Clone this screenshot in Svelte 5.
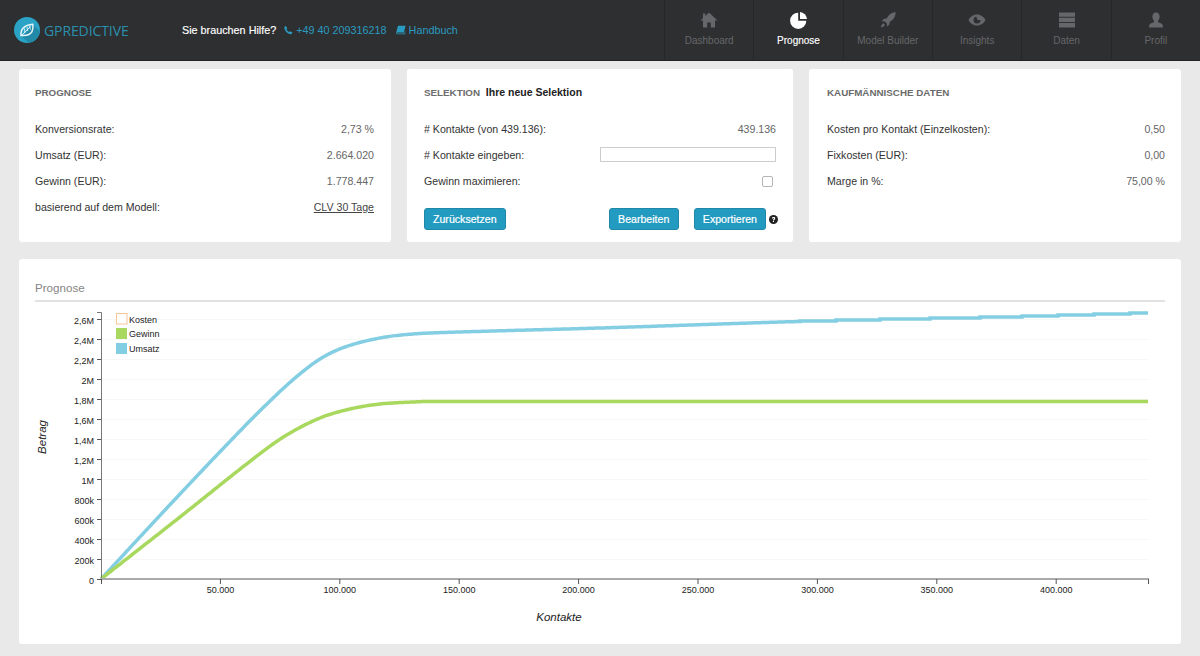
<script>
  const fmtY = (v) => (v === 0 ? '0' : v < 1000 ? v + 'k' : String(v / 1000).replace('.', ',') + 'M');
  const yTicks = Array.from({ length: 14 }, (_, i) => ({ y: 580 - i * 20, label: fmtY(i * 200) }));
  const xTicks = [1, 2, 3, 4, 5, 6, 7, 8].map((i) => ({
    x: 101 + i * 119.4,
    label: (i * 50).toString() + '.000'
  }));

  function curve(pts, stepFrom) {
    let out = [];
    for (let i = 0; i < pts.length - 1; i++) {
      const p0 = pts[Math.max(i - 1, 0)], p1 = pts[i], p2 = pts[i + 1], p3 = pts[Math.min(i + 2, pts.length - 1)];
      const dx = p2[0] - p1[0];
      const n = Math.max(2, Math.round(dx / 2));
      const m1 = (p2[1] - p0[1]) / Math.max(p2[0] - p0[0], 1) * dx;
      const m2 = (p3[1] - p1[1]) / Math.max(p3[0] - p1[0], 1) * dx;
      for (let k = 0; k < n; k++) {
        const t = k / n;
        const h = (2 * t ** 3 - 3 * t ** 2 + 1) * p1[1] + (t ** 3 - 2 * t ** 2 + t) * m1 + (-2 * t ** 3 + 3 * t ** 2) * p2[1] + (t ** 3 - t ** 2) * m2;
        out.push([p1[0] + t * dx, h]);
      }
    }
    out.push(pts[pts.length - 1]);
    let d = `M${out[0][0]} ${out[0][1]}`;
    let lastY = out[0][1];
    for (const [x, y] of out.slice(1)) {
      if (x < stepFrom) {
        d += `L${x.toFixed(1)} ${y.toFixed(2)}`;
        lastY = y;
      } else {
        const qy = Math.round(y);
        if (qy !== lastY) { d += `H${x.toFixed(1)}V${qy}`; lastY = qy; }
        else d += `H${x.toFixed(1)}`;
      }
    }
    return d;
  }

  const blue = curve([[101,580],[180,495],[240,432],[270,402],[295,379],[320,360],[345,348],[380,339],[413,335],[460,333],[600,329],[816,322],[1000,318],[1148,314]], 800);
  const green = curve([[101,580],[180,518],[253,460],[285,437],[320,419],[350,410],[380,405],[413,403],[430,402.5],[1148,402.5]], 2000);

  const nav = [
    { label: 'Dashboard', icon: 'home' },
    { label: 'Prognose', icon: 'pie', active: true },
    { label: 'Model Builder', icon: 'rocket' },
    { label: 'Insights', icon: 'eye' },
    { label: 'Daten', icon: 'stack' },
    { label: 'Profil', icon: 'user' }
  ];
  const progRows = [
    ['Konversionsrate:', '2,73 %'],
    ['Umsatz (EUR):', '2.664.020'],
    ['Gewinn (EUR):', '1.778.447']
  ];
  const kaufRows = [
    ['Kosten pro Kontakt (Einzelkosten):', '0,50'],
    ['Fixkosten (EUR):', '0,00'],
    ['Marge in %:', '75,00 %']
  ];
</script>

<header class="top">
  <div class="brand">
    <svg class="logo" viewBox="0 0 26 26" width="26" height="26">
      <circle cx="13" cy="13" r="13" fill="#2aa3c6" />
      <path d="M8 20 L19 8 L26 14 A13 13 0 0 1 15 25.800 Z" fill="#2389a8" />
      <path d="M7 18.500 C6.500 12 10 8 18.800 7.200 C19.500 12 19 18.500 9.500 18.500 Z" fill="none" stroke="#e6f4f8" stroke-width="1.500" />
      <path d="M8 18 L16.500 9.500 M10.500 11.500 L11 16 M13 10 L13.800 14 M15.500 9 L16.500 12.500" stroke="#e6f4f8" stroke-width="0.900" fill="none" />
    </svg>
    <span class="brand-name">GPREDICTIVE</span>
  </div>
  <div class="help">
    <span class="help-q">Sie brauchen Hilfe?</span>
    <span class="help-link">
      <svg viewBox="0 0 12 12" width="9" height="10"><path d="M2.600.6 4.400 3.500 3.200 5c.7 1.500 2 2.800 3.600 3.700L8.200 7.500l3 1.700c-.3 1.600-1.500 2.500-2.900 2.300C4.600 11 1 7.300.5 3.400.3 2 1.100 1 2.600.6Z" fill="currentColor" /></svg>
      +49 40 209316218
    </span>
    <span class="help-link book">
      <svg viewBox="0 0 12 11" width="10" height="10"><path d="M3 .5h8.500L9.500 8.500H1.500C1 8.500 1 9.800 1.800 9.800h8.200l1-3.800v4.500H1.500C.5 10.500 0 9.500.3 8.500L2 1.500C2.200 1 2.500.5 3 .5Z" fill="currentColor" /></svg>
      Handbuch
    </span>
  </div>
  <nav class="nav">
    {#each nav as item}
      <div class="nav-item" class:active={item.active}>
        <svg class="nav-icon" viewBox="0 0 18 18" width="18" height="18">
          {#if item.icon === 'home'}
            <path d="M9 1.500 17.500 9.500H15V16.500H10.800V11.500H7.200V16.500H3V9.500H.5L3 7.100V2.500H5.300V4.900Z" fill="currentColor" />
          {:else if item.icon === 'pie'}
            <path d="M8.200 1.700V9.800H16.300A8.100 8.100 0 1 1 8.200 1.700Z" fill="currentColor" />
            <path d="M10 .9A8 8 0 0 1 17.100 8H10Z" fill="currentColor" />
          {:else if item.icon === 'rocket'}
            <path d="M16.500 1C12.500 1.500 9.500 3.800 7.500 7.500L4.500 8 2.800 10.500 5.500 10.300 8 12.800 7.800 15.500 10.300 13.800 10.800 10.800C14.500 8.800 16.800 5.500 16.500 1Z" fill="currentColor" />
            <path d="M4.400 12.300 6 14C5 15.500 3.300 16.300 1.800 16.500 2 15 2.900 13.300 4.400 12.300Z" fill="currentColor" />
          {:else if item.icon === 'eye'}
            <path fill-rule="evenodd" d="M9 3.500C13 3.500 16 6 17.500 9 16 12 13 14.500 9 14.500S2 12 .5 9C2 6 5 3.500 9 3.500ZM9 5.500A3.500 3.500 0 1 0 12.500 9H9.500L8.200 5.600Q8.600 5.500 9 5.500Z" fill="currentColor" />
          {:else if item.icon === 'stack'}
            <path d="M1 1.500H17V5.800H1ZM1 6.800H17V11.100H1ZM1 12.100H17V16.500H1Z" fill="currentColor" />
          {:else}
            <path d="M9 1.500C11.300 1.500 12.600 3.300 12.600 5.500 12.600 7.500 11.800 9 11 9.800V11.200C13 11.800 15.500 12.500 15.800 14.500V16.500H2.200V14.500C2.500 12.500 5 11.800 7 11.200V9.800C6.200 9 5.400 7.500 5.400 5.500 5.400 3.300 6.700 1.500 9 1.500Z" fill="currentColor" />
          {/if}
        </svg>
        <span>{item.label}</span>
      </div>
    {/each}
  </nav>
</header>

<main class="page">
  <section class="cards">
    <article class="card">
      <h2 class="title">PROGNOSE</h2>
      {#each progRows as [k, v]}
        <div class="row"><span>{k}</span><span class="val">{v}</span></div>
      {/each}
      <div class="row"><span>basierend auf dem Modell:</span><span class="val link">CLV 30 Tage</span></div>
    </article>

    <article class="card sel">
      <h2 class="title">SELEKTION <b>Ihre neue Selektion</b></h2>
      <div class="row"><span># Kontakte (von 439.136):</span><span class="val">439.136</span></div>
      <div class="row"><span># Kontakte eingeben:</span><input class="field" type="text" /></div>
      <div class="row"><span>Gewinn maximieren:</span><input class="check" type="checkbox" /></div>
      <div class="actions">
        <button class="btn">Zurücksetzen</button>
        <button class="btn push">Bearbeiten</button>
        <button class="btn">Exportieren</button>
        <svg class="qmark" viewBox="0 0 12 12" width="9" height="9">
          <circle cx="6" cy="6" r="6" fill="#222" />
          <path d="M3.800 4.600C3.900 3.300 4.900 2.700 6.100 2.700 7.400 2.700 8.300 3.400 8.300 4.500 8.300 6 6.700 5.900 6.700 7.200H5.200C5.100 5.400 6.600 5.300 6.600 4.600 6.600 4.200 6.400 4 6 4 5.600 4 5.400 4.300 5.300 4.800ZM5.200 7.900H6.700V9.300H5.200Z" fill="#fff" />
        </svg>
      </div>
    </article>

    <article class="card kauf">
      <h2 class="title">KAUFMÄNNISCHE DATEN</h2>
      {#each kaufRows as [k, v]}
        <div class="row"><span>{k}</span><span class="val">{v}</span></div>
      {/each}
    </article>
  </section>

  <section class="chart-card">
    <h3 class="chart-title">Prognose</h3>
    <svg class="chart" viewBox="35 302 1130 342" width="1130" height="342">
      {#each yTicks.slice(1) as t}
        <line x1="101" x2="1148" y1={t.y + 0.5} y2={t.y + 0.5} class="grid" />
      {/each}
      <path d={blue} class="line-blue" />
      <path d={green} class="line-green" />

      <path d="M97 313.500H101.500V580.500" class="axis-y" />
      {#each yTicks as t}
        <line x1="97" x2="101" y1={t.y + 0.5} y2={t.y + 0.5} class="tick" />
        <text x="94" y={t.y + 4.6} text-anchor="end" class="tl">{t.label}</text>
      {/each}

      <line x1="101" x2="1149" y1="580" y2="580" class="axis-x" />
      <line x1="101.500" x2="101.500" y1="580" y2="585" class="tick" />
      <line x1="1148.500" x2="1148.500" y1="580" y2="585" class="tick" />
      {#each xTicks as t}
        <line x1={t.x} x2={t.x} y1="580" y2="585" class="tick" />
        <text x={t.x} y="594" text-anchor="middle" class="tl">{t.label}</text>
      {/each}

      <rect x="116.500" y="314.500" width="10.500" height="10.500" class="sw-k" />
      <rect x="116" y="329" width="11" height="11" class="sw-g" />
      <rect x="116" y="344" width="11" height="11" class="sw-u" />
      <text x="129" y="323.500" class="tl">Kosten</text>
      <text x="129" y="338" class="tl">Gewinn</text>
      <text x="129" y="353" class="tl">Umsatz</text>

      <text x="559" y="622" text-anchor="middle" class="axis-name">Kontakte</text>
      <text transform="translate(46 438) rotate(-90)" text-anchor="middle" class="axis-name">Betrag</text>
    </svg>
  </section>
</main>

<style>
  :global(body) {
    margin: 0;
    background: #e9e9e9;
    font-family: "Liberation Sans", Arial, sans-serif;
    color: #333;
  }
  .top {
    height: 60px;
    display: flex;
    align-items: center;
    background: #2e2f31;
    border-bottom: 1px solid #222;
  }
  .brand {
    display: flex;
    align-items: center;
    gap: 4px;
    width: 182px;
    padding-left: 14px;
    box-sizing: border-box;
  }
  .logo {
    flex: none;
  }
  .brand-name {
    font-family: "Open Sans", sans-serif;
    font-size: 14px;
    color: #2a8fae;
    letter-spacing: -0.1px;
  }
  .help {
    display: flex;
    align-items: center;
    gap: 8px;
    font-size: 10.800px;
  }
  .help-q {
    color: #fff;
    -webkit-text-stroke: 0.15px #fff;
  }
  .help-link {
    color: #2a9bc0;
    display: inline-flex;
    align-items: center;
    gap: 3px;
  }
  .book {
    margin-left: 1px;
  }
  .nav {
    margin-left: auto;
    display: grid;
    grid-template-columns: repeat(6, 89.33px);
    height: 60px;
  }
  .nav-item {
    display: flex;
    flex-direction: column;
    align-items: center;
    border-left: 1px solid #262729;
    color: #66676a;
    font-size: 10px;
    padding-top: 11px;
    box-sizing: border-box;
  }
  .nav-item span {
    margin-top: 6px;
  }
  .nav-item.active {
    color: #fff;
    -webkit-text-stroke: 0.15px #fff;
  }
  .nav-icon {
    display: block;
  }
  .page {
    padding: 8px 19px 0;
  }
  .cards {
    display: grid;
    grid-template-columns: 372px 386px 372px;
    gap: 16px;
  }
  .card {
    height: 173px;
    background: #fff;
    border-radius: 3px;
    padding: 17px 17px 0 16px;
    box-sizing: border-box;
    font-size: 10.600px;
  }
  .card.sel {
    padding-left: 17px;
  }
  .card.kauf {
    padding: 17px 16px 0 18px;
  }
  .title {
    margin: 0 0 17px;
    height: 13px;
    line-height: 13px;
    font-size: 9.800px;
    font-weight: 700;
    color: #6b6b6b;
  }
  .title b {
    color: #222;
    margin-left: 3px;
    font-size: 10.500px;
  }
  .row {
    height: 26px;
    display: flex;
    align-items: center;
    justify-content: space-between;
    color: #333;
  }
  .val {
    color: #666;
  }
  .link {
    color: #444;
    text-decoration: underline;
  }
  .field {
    width: 176px;
    height: 15px;
    box-sizing: border-box;
    border: 1px solid #ccc;
    margin: 0 0 2px;
    padding: 0;
    background: #fff;
  }
  .check {
    appearance: none;
    width: 11px;
    height: 11px;
    border: 1px solid #b5b5b5;
    border-radius: 2px;
    margin: 0 3px 0 0;
    background: #fff;
  }
  .actions {
    display: flex;
    align-items: center;
    margin-top: 14px;
  }
  .btn {
    height: 22px;
    padding: 0 8px;
    margin-right: 15px;
    background: #239ac0;
    border: 1px solid #1f88aa;
    border-radius: 3px;
    color: #fff;
    font: 10.600px "Liberation Sans", Arial, sans-serif;
    -webkit-text-stroke: 0.2px #fff;
  }
  .btn.push {
    margin-left: auto;
    padding: 0 8.500px;
  }
  .btn:last-of-type {
    margin-right: 0;
  }
  .qmark {
    margin-left: 3px;
    margin-right: -2px;
  }
  .chart-card {
    margin-top: 17px;
    height: 385px;
    background: #fff;
    border-radius: 3px;
    padding: 22px 16px 0;
    box-sizing: border-box;
  }
  .chart-title {
    margin: 0;
    height: 21px;
    box-sizing: border-box;
    line-height: 13px;
    font-size: 11.600px;
    font-weight: 400;
    color: #858585;
    border-bottom: 2px solid #e2e2e2;
  }
  .chart {
    display: block;
    margin-top: -1px;
  }
  .grid {
    stroke: #f7f7f7;
    stroke-width: 1;
  }
  .line-blue,
  .line-green {
    fill: none;
    stroke-width: 3.500;
  }
  .line-blue {
    stroke: #84cee3;
  }
  .line-green {
    stroke: #a9d85f;
  }
  .axis-y {
    fill: none;
    stroke: #777;
    stroke-width: 1;
  }
  .tick {
    stroke: #555;
    stroke-width: 1;
  }
  .axis-x {
    stroke: #aaa;
    stroke-width: 2;
  }
  .tl {
    font-size: 9px;
    fill: #222;
  }
  .axis-name {
    font-size: 11.500px;
    font-style: italic;
    fill: #222;
  }
  .sw-k {
    fill: #fff;
    stroke: #f5c596;
    stroke-width: 1;
  }
  .sw-g {
    fill: #a9d85f;
  }
  .sw-u {
    fill: #84cee3;
  }
</style>
